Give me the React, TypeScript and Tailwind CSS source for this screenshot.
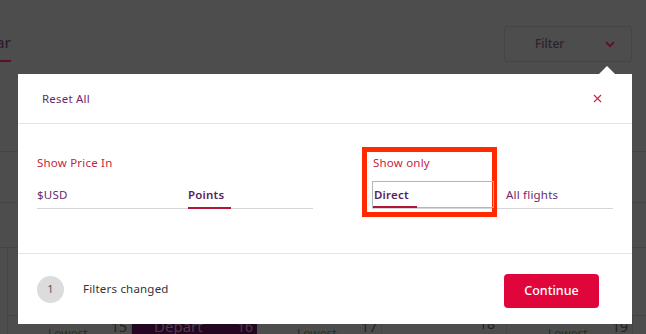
import { X } from "lucide-react";

const font = { fontFamily: '"Noto Sans", "Liberation Sans", sans-serif' };

function BackgroundPage() {
  return (
    <div className="flex h-full flex-col">
      {/* header: tab + filter button */}
      <div className="flex h-[74px] items-start justify-between pr-[14px] pt-[26px]">
        <div className="-ml-[4px] flex flex-col items-end pt-[6px]">
          <span className="text-[15px] font-medium leading-[20px] text-[#2f1a30]">ar</span>
          <div className="mt-[8px] h-[2px] w-[14px] bg-[#5c0f1e]" />
        </div>
        <div className="flex h-[36px] w-[128px] items-center justify-between rounded-[3px] border border-[#454545] pl-[30px] pr-[16px]">
          <span className="text-[12px] font-medium text-[#2e222e]">Filter</span>
          <svg width="10" height="7" viewBox="0 0 10 7" fill="none">
            <path d="M1 1.2l4 4 4-4" stroke="#5e1020" strokeWidth="1.8" />
          </svg>
        </div>
      </div>
      {/* table grid behind overlay */}
      <div className="h-[78px] border-b border-[#454545]" />
      <div className="h-[51px] border-b border-[#454545]" />
      <div className="h-[45px] border-b border-[#454545]" />
      <div className="ml-[7px] h-[68px] border-b border-l border-[#454545]" />
      <div className="ml-[7px] grid h-[18px] grid-cols-[124px_125px_125px_125px_126px] border-l border-[#454545] leading-[18px]">
        <div className="flex justify-between border-r border-[#454545] pl-[40px] pr-[4px]">
          <span className="pt-[9px] text-[12px] text-[#1f3322]">Lowest</span>
          <span className="pt-[2px] text-[14px] text-[#222]">15</span>
        </div>
        <div className="flex justify-between bg-[#230720] pl-[18px] pr-[4px]">
          <span className="pl-[4px] pt-[1px] text-[15px] text-[#4e3a4e]">Depart</span>
          <span className="pt-[2px] text-[14px] text-[#4e3a4e]">16</span>
        </div>
        <div className="flex justify-between border-r border-[#454545] pl-[40px] pr-[4px]">
          <span className="pt-[9px] text-[12px] text-[#1f3322]">Lowest</span>
          <span className="pt-[2px] text-[14px] text-[#222]">17</span>
        </div>
        <div className="flex justify-end border-r border-[#454545] pr-[11px]">
          <span className="-mt-[1px] text-[14px] text-[#222]">18</span>
        </div>
        <div className="flex justify-between border-r border-[#454545] pl-[41px] pr-[4px]">
          <span className="pt-[9px] text-[12px] text-[#1f3322]">Lowest</span>
          <span className="pt-[2px] text-[14px] text-[#222]">19</span>
        </div>
      </div>
    </div>
  );
}

function FilterModal() {
  return (
    <div className="absolute left-[18px] top-[74px] flex h-[250px] w-[614px] flex-col bg-white">
      {/* caret pointing at Filter button */}
      <div className="absolute -top-[8px] left-[581px] h-0 w-0 border-x-[8px] border-b-[8px] border-x-transparent border-b-white" />

      <div className="flex h-[50px] items-center justify-between border-b border-[#e4e4e4] pl-[24px] pr-[28px]">
        <span className="text-[11.5px] tracking-[0.2px] text-[#6b2a6e]">Reset All</span>
        <X size={13} strokeWidth={2} color="#d4203f" />
      </div>

      <div className="flex h-[130px] border-b border-[#e4e4e4] pl-[19px] pt-[31px]">
        <div className="flex w-[276px] flex-col">
          <span className="text-[11.5px] leading-[16px] tracking-[0.2px] text-[#c41f3e]">Show Price In</span>
          <div className="mt-[10px] flex h-[28px] border-b border-[#d6d6d6]">
            <div className="flex w-[151px] items-center text-[11.5px] tracking-[0.2px] text-[#6b2a6e]">$USD</div>
            <div className="relative flex items-center text-[11.5px] font-semibold tracking-[0.2px] text-[#5a1e60]">
              Points
              <div className="absolute -bottom-px left-0 h-[2px] w-[43px] bg-[#b0163a]" />
            </div>
          </div>
        </div>

        <div className="relative ml-[59px] flex w-[241px] flex-col">
          {/* highlight annotation */}
          <div className="absolute -left-[10px] -top-[8px] h-[70px] w-[135px] border-[5px] border-[#ff2a00]" />
          <span className="pl-[1px] text-[11.5px] leading-[16px] tracking-[0.2px] text-[#c41f3e]">Show only</span>
          <div className="mt-[10px] flex h-[28px] border-b border-[#d6d6d6]">
            <div className="relative flex w-[122px] items-center border border-[#aeb7c0] pl-[1px] text-[11.5px] font-semibold tracking-[0.2px] text-[#5a1e60]">
              Direct
              <div className="absolute -bottom-px left-0 h-[2px] w-[44px] bg-[#b0163a]" />
            </div>
            <div className="flex items-center pl-[12px] text-[11.5px] tracking-[0.2px] text-[#6b2a6e]">All flights</div>
          </div>
        </div>
      </div>

      <div className="flex flex-1 items-center justify-between pl-[19px] pr-[33px] pt-[4px]">
        <div className="-mt-[4px] flex items-center gap-[19px]">
          <div className="flex h-[27px] w-[27px] items-center justify-center rounded-full bg-[#dcdcdc] text-[11px] text-[#555]">
            1
          </div>
          <span className="text-[11.5px] tracking-[0.2px] text-[#333]">Filters changed</span>
        </div>
        <button className="flex h-[34px] w-[95px] items-center justify-center rounded-[4px] bg-[#e0063c] text-[12.5px] font-medium text-white">
          Continue
        </button>
      </div>
    </div>
  );
}

export default function App() {
  return (
    <div className="relative h-[334px] w-[646px] overflow-hidden bg-[#4d4d4d]" style={font}>
      <BackgroundPage />
      <FilterModal />
    </div>
  );
}
